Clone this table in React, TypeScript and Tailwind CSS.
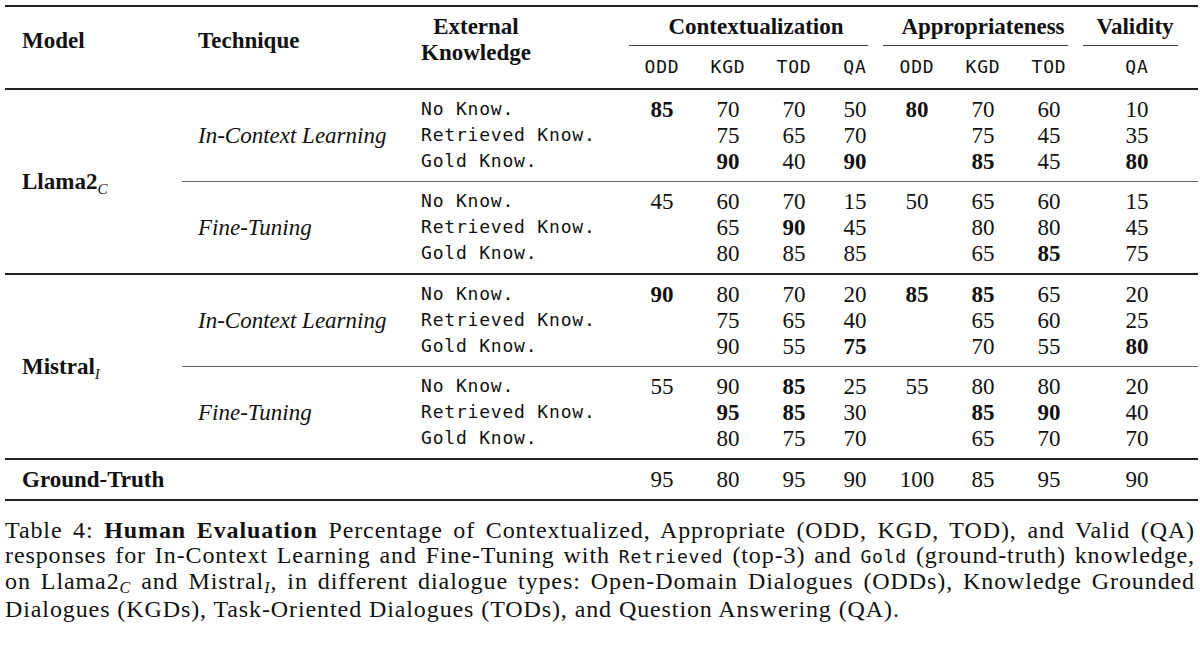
import React from 'react';

const serif = "font-['Liberation_Serif','Times_New_Roman',serif]";
const mono = "font-['DejaVu_Sans_Mono','Liberation_Mono',monospace] text-[18px] tracking-[0.8px]";
const numGrid = 'grid grid-cols-[66px_66px_66px_56px_68px_64px_68px_108px_7px]';

type Group = { technique: string; rows: { know: string; vals: string[] }[] };

const llama: Group[] = [
  {
    technique: 'In-Context Learning',
    rows: [
      { know: 'No Know.', vals: ['*85', '70', '70', '50', '*80', '70', '60', '10'] },
      { know: 'Retrieved Know.', vals: ['', '75', '65', '70', '', '75', '45', '35'] },
      { know: 'Gold Know.', vals: ['', '*90', '40', '*90', '', '*85', '45', '*80'] },
    ],
  },
  {
    technique: 'Fine-Tuning',
    rows: [
      { know: 'No Know.', vals: ['45', '60', '70', '15', '50', '65', '60', '15'] },
      { know: 'Retrieved Know.', vals: ['', '65', '*90', '45', '', '80', '80', '45'] },
      { know: 'Gold Know.', vals: ['', '80', '85', '85', '', '65', '*85', '75'] },
    ],
  },
];

const mistral: Group[] = [
  {
    technique: 'In-Context Learning',
    rows: [
      { know: 'No Know.', vals: ['*90', '80', '70', '20', '*85', '*85', '65', '20'] },
      { know: 'Retrieved Know.', vals: ['', '75', '65', '40', '', '65', '60', '25'] },
      { know: 'Gold Know.', vals: ['', '90', '55', '*75', '', '70', '55', '*80'] },
    ],
  },
  {
    technique: 'Fine-Tuning',
    rows: [
      { know: 'No Know.', vals: ['55', '90', '*85', '25', '55', '80', '80', '20'] },
      { know: 'Retrieved Know.', vals: ['', '*95', '*85', '30', '', '*85', '*90', '40'] },
      { know: 'Gold Know.', vals: ['', '80', '75', '70', '', '65', '70', '70'] },
    ],
  },
];

const groundTruth = ['95', '80', '95', '90', '100', '85', '95', '90'];

const Nums = ({ vals }: { vals: string[] }) => (
  <div className={numGrid}>
    {vals.map((v, i) => (
      <div key={i} className={`text-center ${v.startsWith('*') ? 'font-bold' : ''}`}>
        {v.replace('*', '')}
      </div>
    ))}
    <div />
  </div>
);

const TechniqueGroup = ({ group }: { group: Group }) => (
  <div className="flex pt-[6px] pb-[7px]">
    <div className="w-[239px] pl-[16px] flex items-center italic">{group.technique}</div>
    <div className="flex flex-col">
      {group.rows.map((r) => (
        <div key={r.know} className="flex h-[26px] items-center">
          <div className={`w-[208px] ${mono}`}>{r.know}</div>
          <Nums vals={r.vals} />
        </div>
      ))}
    </div>
  </div>
);

const ModelBlock = ({ name, sub, groups }: { name: string; sub: string; groups: Group[] }) => (
  <div className="flex">
    <div className="w-[177px] pl-[17px] flex items-center font-bold">
      <span>
        {name}
        <span className="italic font-normal text-[15px] relative top-[5px]">{sub}</span>
      </span>
    </div>
    <div className="flex flex-col">
      <TechniqueGroup group={groups[0]} />
      <div className="h-px bg-[#666]" />
      <TechniqueGroup group={groups[1]} />
    </div>
  </div>
);

export default function App() {
  return (
    <div className={`w-[1200px] h-[659px] bg-white text-[#111] ${serif} text-[23px] leading-none`}>
      <div className="pt-[5px] pl-[5px]">
        <div className="w-[1193px]">
          <div className="h-[2px] bg-[#222]" />

          {/* Header */}
          <div className="flex h-[81px] font-bold">
            <div className="w-[177px] pl-[17px] pb-[14px] flex items-center">Model</div>
            <div className="w-[239px] pl-[16px] pb-[14px] flex items-center">Technique</div>
            <div className="w-[208px] pt-[7px]">
              <div className="inline-block text-center leading-[26px]">
                External
                <br />
                Knowledge
              </div>
            </div>
            <div className="flex flex-col">
              <div className="flex h-[39px]">
                <div className="w-[254px] flex flex-col">
                  <div className="flex-1 flex items-center justify-center">Contextualization</div>
                  <div className="h-px bg-[#444] mr-[15px]" />
                </div>
                <div className="w-[200px] flex flex-col">
                  <div className="flex-1 flex items-center justify-center">Appropriateness</div>
                  <div className="h-px bg-[#444] mr-[15px]" />
                </div>
                <div className="w-[108px] flex flex-col">
                  <div className="flex-1 flex items-center justify-center pr-[4px]">Validity</div>
                  <div className="h-px bg-[#444] mr-[13px]" />
                </div>
              </div>
              <div className={`${numGrid} h-[42px] items-center font-normal ${mono}`}>
                {['ODD', 'KGD', 'TOD', 'QA', 'ODD', 'KGD', 'TOD', 'QA'].map((h, i) => (
                  <div key={i} className="text-center">
                    {h}
                  </div>
                ))}
                <div />
              </div>
            </div>
          </div>

          <div className="h-[2px] bg-[#222]" />
          <ModelBlock name="Llama2" sub="C" groups={llama} />
          <div className="h-[2px] bg-[#222]" />
          <ModelBlock name="Mistral" sub="I" groups={mistral} />
          <div className="h-[2px] bg-[#222]" />

          {/* Ground truth */}
          <div className="flex h-[39px] items-center">
            <div className="w-[624px] pl-[17px] font-bold">Ground-Truth</div>
            <Nums vals={groundTruth} />
          </div>
          <div className="h-[2px] bg-[#222]" />
        </div>

        {/* Caption */}
        <div className="w-[1190px] mt-[17px] text-[24px] tracking-[0.9px] leading-[24.5px]">
          <div className="text-justify [text-align-last:justify]">
            Table 4: <span className="font-bold">Human Evaluation</span> Percentage of Contextualized, Appropriate
            (ODD, KGD, TOD), and Valid (QA)
          </div>
          <div className="text-justify [text-align-last:justify]">
            responses for In-Context Learning and Fine-Tuning with{' '}
            <span className={mono}>Retrieved</span> (top-3) and <span className={mono}>Gold</span> (ground-truth)
            knowledge,
          </div>
          <div className="text-justify [text-align-last:justify]">
            on Llama2<span className="italic text-[16px] relative top-[4px]">C</span> and Mistral
            <span className="italic text-[16px] relative top-[4px]">I</span>, in different dialogue types:
            Open-Domain Dialogues (ODDs), Knowledge Grounded
          </div>
          <div>Dialogues (KGDs), Task-Oriented Dialogues (TODs), and Question Answering (QA).</div>
        </div>
      </div>
    </div>
  );
}
